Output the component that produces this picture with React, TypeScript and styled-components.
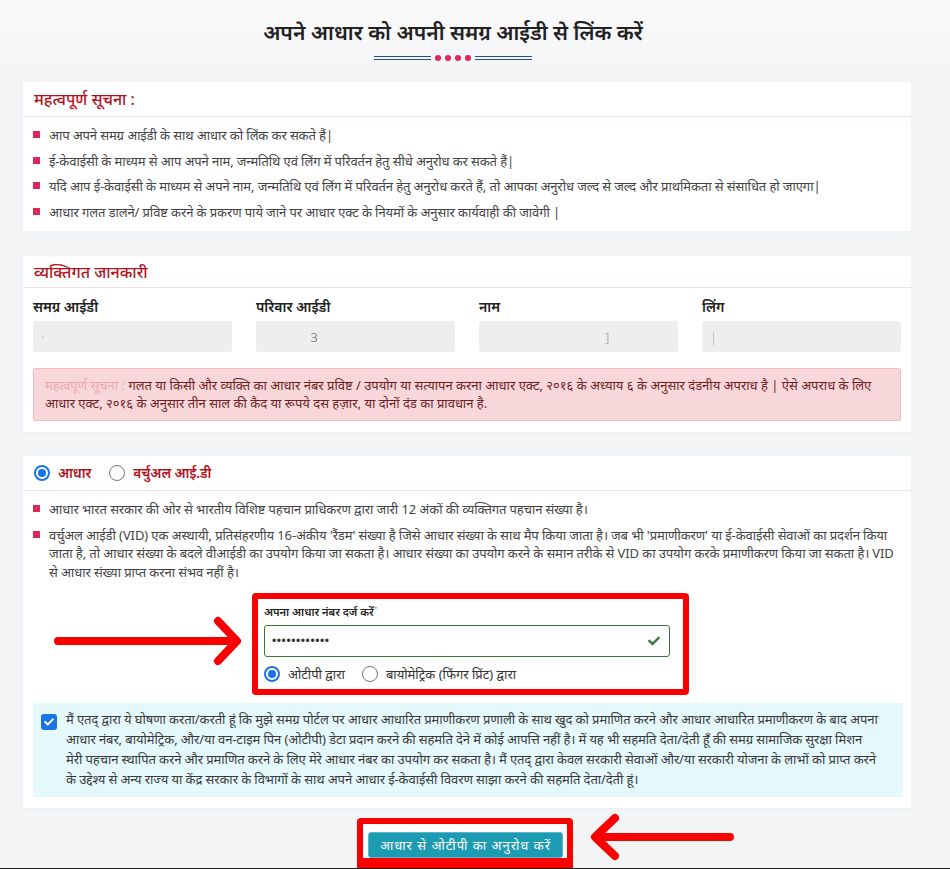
import React from 'react';
import styled, { createGlobalStyle } from 'styled-components';
import { FaCheck } from 'react-icons/fa';

const Global = createGlobalStyle`
  html, body { margin: 0; padding: 0; background: #f3f4f6; }
  body { font-family: "Noto Sans", "Liberation Sans", Arial, sans-serif; color: #333; }
  * { box-sizing: border-box; }
`;

const Page = styled.div`
  width: 950px;
  height: 869px;
  overflow: hidden;
  background: linear-gradient(#fafafa 0, #f3f4f6 78px, #f3f4f6 100%);
`;

const TitleSection = styled.header`
  width: 906px;
  height: 82px;
  display: flex;
  flex-direction: column;
  align-items: center;
  padding-top: 17px;
`;

const Title = styled.h1`
  margin: 0;
  font-size: 21px;
  line-height: 30px;
  font-weight: 600;
  color: #222;
`;

const Divider = styled.div`
  margin-top: 8px;
  display: flex;
  align-items: center;
  gap: 4px;
`;

const DividerLine = styled.span`
  display: block;
  width: 57px;
  height: 4px;
  border-top: 1px solid #2c4f80;
  border-bottom: 1px solid #2c4f80;
`;

const Dot = styled.span`
  display: block;
  width: 6px;
  height: 6px;
  border-radius: 50%;
  background: #e6245c;
`;

const Container = styled.main`
  width: 888px;
  margin-left: 23px;
  display: flex;
  flex-direction: column;
`;

const Card = styled.section<{ $gap?: number }>`
  background: #fff;
  margin-top: ${(p) => p.$gap ?? 0}px;
  box-shadow: 0 1px 2px rgba(0, 0, 0, 0.03);
  position: relative;
`;

const CardHeader = styled.div<{ $h: number }>`
  height: ${(p) => p.$h}px;
  display: flex;
  align-items: center;
  gap: 8px;
  padding: 0 11px;
  border-bottom: 1px solid #f2dfe3;
  color: #b3121c;
  font-size: 16px;
  font-weight: 500;
`;

const BulletList = styled.ul<{ $pad?: string }>`
  list-style: none;
  margin: 0;
  padding: ${(p) => p.$pad ?? '9px 14px 10px 10px'};
`;

const Bullet = styled.li`
  position: relative;
  padding-left: 16px;
  font-size: 13px;
  line-height: 18.5px;
  letter-spacing: -0.1px;
  color: #444;
  & + & { margin-top: 7px; }
  &::before {
    content: '';
    position: absolute;
    left: 0;
    top: 5px;
    width: 7px;
    height: 7px;
    background: #e0245e;
  }
`;

const CardBody = styled.div`
  padding: 10px 10px 11px 10px;
`;

const FieldGrid = styled.div`
  display: grid;
  grid-template-columns: repeat(4, 199px);
  column-gap: 24px;
`;

const Field = styled.div`
  display: flex;
  flex-direction: column;
`;

const FieldLabel = styled.label`
  font-size: 14px;
  line-height: 18px;
  font-weight: 600;
  color: #222;
  margin-bottom: 5px;
`;

const ReadonlyInput = styled.div`
  height: 31px;
  background: #eeeeee;
  border-radius: 3px;
  padding: 0 8px;
  display: flex;
  align-items: center;
  font-size: 13px;
  color: #d0d0d0;
  filter: blur(0.6px);
`;

const Faint = styled.span<{ $c: string; $ml?: number }>`
  color: ${(p) => p.$c};
  margin-left: ${(p) => p.$ml ?? 0}px;
`;

const Alert = styled.div`
  margin-top: 16px;
  background: #f8d7da;
  border: 1px solid #f1bcc2;
  border-radius: 2px;
  padding: 7px 11px 8px 11px;
  font-size: 13px;
  line-height: 18px;
  color: #6e1f25;
`;

const AlertLead = styled.span`
  color: #eaa9b1;
`;

const RadioOption = styled.label<{ $strong?: boolean; $gapRight?: number }>`
  display: inline-flex;
  align-items: center;
  gap: 8px;
  margin-right: ${(p) => p.$gapRight ?? 0}px;
  font-size: ${(p) => (p.$strong ? 13.5 : 13)}px;
  font-weight: ${(p) => (p.$strong ? 600 : 400)};
  color: ${(p) => (p.$strong ? '#b3121c' : '#333')};
`;

const RadioDot = styled.span<{ $on?: boolean }>`
  width: 16px;
  height: 16px;
  border-radius: 50%;
  flex: none;
  border: ${(p) => (p.$on ? '2px solid #1a73e8' : '1px solid #767676')};
  background: #fff;
  display: flex;
  align-items: center;
  justify-content: center;
  &::after {
    content: '';
    display: ${(p) => (p.$on ? 'block' : 'none')};
    width: 8px;
    height: 8px;
    border-radius: 50%;
    background: #1a73e8;
  }
`;

const Card3Body = styled.div`
  padding: 0 8px 11px 10px;
`;

const FormRow = styled.div`
  position: relative;
  margin-top: 12px;
`;

const Highlight = styled.div`
  width: 437px;
  margin-left: 219px;
  border: 6px solid #fb0000;
  border-radius: 4px;
  padding: 3px 13px 6px 6px;
  background: #fff;
`;

const SmallLabel = styled.div`
  font-size: 11px;
  line-height: 14px;
  font-weight: 600;
  color: #222;
  sup { font-size: 7px; color: #999; font-weight: 400; }
`;

const AadhaarInput = styled.div`
  margin-top: 6px;
  height: 32px;
  border: 1px solid #3c763d;
  border-radius: 3px;
  display: flex;
  align-items: center;
  justify-content: space-between;
  padding: 0 9px 0 7px;
  color: #3a7d3a;
`;

const Masked = styled.span`
  font-family: "Liberation Sans", Arial, sans-serif;
  font-size: 12px;
  letter-spacing: 0.6px;
  color: #333;
`;

const RadioRow = styled.div`
  margin-top: 8px;
  height: 18px;
  display: flex;
  align-items: center;
`;

const ArrowSvg = styled.svg<{ $l: number; $t: number }>`
  position: absolute;
  left: ${(p) => p.$l}px;
  top: ${(p) => p.$t}px;
  overflow: visible;
`;

const ConsentPanel = styled.div`
  margin-top: 8px;
  background: #e5f9fd;
  padding: 6px 24px 8px 8px;
  display: flex;
  gap: 9px;
`;

const CheckBox = styled.span`
  flex: none;
  margin-top: 5px;
  width: 16px;
  height: 16px;
  border-radius: 3px;
  background: #1a73e8;
  display: flex;
  align-items: center;
  justify-content: center;
  color: #fff;
`;

const ConsentText = styled.p`
  margin: 0;
  font-size: 13px;
  line-height: 20px;
  letter-spacing: -0.1px;
  color: #3a3a3a;
`;

const ButtonRow = styled.div`
  position: relative;
  padding-top: 10px;
`;

const ButtonHighlight = styled.div`
  width: 216px;
  margin-left: 334px;
  border: 6px solid #fb0000;
  border-bottom-width: 10px;
  border-radius: 4px 4px 0 0;
  padding: 8px 4px 0 5px;
  background: #fff;
`;

const PrimaryButton = styled.button`
  display: block;
  width: 195px;
  height: 26px;
  border: 1px solid #5cb8c8;
  border-radius: 3px;
  background: #1d9bb2;
  color: #fff;
  font-family: "Noto Sans", "Liberation Sans", Arial, sans-serif;
  font-size: 13px;
  letter-spacing: 1px;
  padding: 0;
  cursor: pointer;
`;

const Footer = styled.footer`
  height: 40px;
  background: #1c1c1c;
`;

const ArrowRight = ({ l, t }: { l: number; t: number }) => (
  <ArrowSvg $l={l} $t={t} width="196" height="52" viewBox="0 0 196 52">
    <g fill="none" stroke="#fb0000" strokeWidth="8" strokeLinecap="round" strokeLinejoin="round">
      <line x1="8" y1="26" x2="184" y2="26" />
      <polyline points="168,6 187,26 168,46" />
    </g>
  </ArrowSvg>
);

const ArrowLeft = ({ l, t }: { l: number; t: number }) => (
  <ArrowSvg $l={l} $t={t} width="155" height="50" viewBox="0 0 155 50">
    <g fill="none" stroke="#fb0000" strokeWidth="8" strokeLinecap="round" strokeLinejoin="round">
      <line x1="13" y1="24" x2="145" y2="24" />
      <polyline points="30,5 10,24 30,43" />
    </g>
  </ArrowSvg>
);

export default function App() {
  return (
    <Page>
      <Global />
      <TitleSection>
        <Title>अपने आधार को अपनी समग्र आईडी से लिंक करें</Title>
        <Divider>
          <DividerLine />
          <Dot />
          <Dot />
          <Dot />
          <Dot />
          <DividerLine />
        </Divider>
      </TitleSection>

      <Container>
        <Card>
          <CardHeader $h={35}>महत्वपूर्ण सूचना :</CardHeader>
          <BulletList>
            <Bullet>आप अपने समग्र आईडी के साथ आधार को लिंक कर सकते हैं|</Bullet>
            <Bullet>ई-केवाईसी के माध्यम से आप अपने नाम, जन्मतिथि एवं लिंग में परिवर्तन हेतु सीधे अनुरोध कर सकते हैं|</Bullet>
            <Bullet>यदि आप ई-केवाईसी के माध्यम से अपने नाम, जन्मतिथि एवं लिंग में परिवर्तन हेतु अनुरोध करते हैं, तो आपका अनुरोध जल्द से जल्द और प्राथमिकता से संसाधित हो जाएगा|</Bullet>
            <Bullet>आधार गलत डालने/ प्रविष्ट करने के प्रकरण पाये जाने पर आधार एक्ट के नियमों के अनुसार कार्यवाही की जावेगी |</Bullet>
          </BulletList>
        </Card>

        <Card $gap={25}>
          <CardHeader $h={32}>व्यक्तिगत जानकारी</CardHeader>
          <CardBody>
            <FieldGrid>
              <Field>
                <FieldLabel>समग्र आईडी</FieldLabel>
                <ReadonlyInput><Faint $c="#c9c9c9">·</Faint><Faint $c="#e2e2e2" $ml={4}>- - -</Faint></ReadonlyInput>
              </Field>
              <Field>
                <FieldLabel>परिवार आईडी</FieldLabel>
                <ReadonlyInput><Faint $c="#e4e4e4" $ml={8}>- - - - -</Faint><Faint $c="#888" $ml={4}>3</Faint></ReadonlyInput>
              </Field>
              <Field>
                <FieldLabel>नाम</FieldLabel>
                <ReadonlyInput><Faint $c="#e6e6e6">- - - - - - - - - - - - - - -</Faint><Faint $c="#b0b0b0" $ml={8}>]</Faint></ReadonlyInput>
              </Field>
              <Field>
                <FieldLabel>लिंग</FieldLabel>
                <ReadonlyInput><Faint $c="#c0c0c0">|</Faint></ReadonlyInput>
              </Field>
            </FieldGrid>
            <Alert>
              <AlertLead>महत्वपूर्ण सूचना : </AlertLead>
              गलत या किसी और व्यक्ति का आधार नंबर प्रविष्ट / उपयोग या सत्यापन करना आधार एक्ट, २०१६ के अध्याय ६ के अनुसार दंडनीय अपराध है | ऐसे अपराध के लिए आधार एक्ट, २०१६ के अनुसार तीन साल की कैद या रूपये दस हज़ार, या दोनों दंड का प्रावधान है.
            </Alert>
          </CardBody>
        </Card>

        <Card $gap={24}>
          <CardHeader $h={35}>
            <RadioOption $strong $gapRight={10}><RadioDot $on />आधार</RadioOption>
            <RadioOption $strong><RadioDot />वर्चुअल आई.डी</RadioOption>
          </CardHeader>
          <Card3Body>
            <BulletList $pad="9px 0 0 0">
              <Bullet>आधार भारत सरकार की ओर से भारतीय विशिष्ट पहचान प्राधिकरण द्वारा जारी 12 अंकों की व्यक्तिगत पहचान संख्या है।</Bullet>
              <Bullet>वर्चुअल आईडी (VID) एक अस्थायी, प्रतिसंहरणीय 16-अंकीय 'रैंडम' संख्या है जिसे आधार संख्या के साथ मैप किया जाता है। जब भी 'प्रमाणीकरण' या ई-केवाईसी सेवाओं का प्रदर्शन किया जाता है, तो आधार संख्या के बदले वीआईडी का उपयोग किया जा सकता है। आधार संख्या का उपयोग करने के समान तरीके से VID का उपयोग करके प्रमाणीकरण किया जा सकता है। VID से आधार संख्या प्राप्त करना संभव नहीं है।</Bullet>
            </BulletList>
            <FormRow>
              <ArrowRight l={17} t={22} />
              <Highlight>
                <SmallLabel>अपना आधार नंबर दर्ज करें<sup>*</sup></SmallLabel>
                <AadhaarInput>
                  <Masked>••••••••••••</Masked>
                  <FaCheck size={12} />
                </AadhaarInput>
                <RadioRow>
                  <RadioOption $gapRight={17}><RadioDot $on />ओटीपी द्वारा</RadioOption>
                  <RadioOption><RadioDot />बायोमेट्रिक (फिंगर प्रिंट) द्वारा</RadioOption>
                </RadioRow>
              </Highlight>
            </FormRow>
            <ConsentPanel>
              <CheckBox><FaCheck size={10} /></CheckBox>
              <ConsentText>
                मैं एतद् द्वारा ये घोषणा करता/करती हूं कि मुझे समग्र पोर्टल पर आधार आधारित प्रमाणीकरण प्रणाली के साथ खुद को प्रमाणित करने और आधार आधारित प्रमाणीकरण के बाद अपना आधार नंबर, बायोमेट्रिक, और/या वन-टाइम पिन (ओटीपी) डेटा प्रदान करने की सहमति देने में कोई आपत्ति नहीं है। में यह भी सहमति देता/देती हूँ की समग्र सामाजिक सुरक्षा मिशन मेरी पहचान स्थापित करने और प्रमाणित करने के लिए मेरे आधार नंबर का उपयोग कर सकता है। मैं एतद् द्वारा केवल सरकारी सेवाओं और/या सरकारी योजना के लाभों को प्राप्त करने के उद्देश्य से अन्य राज्य या केंद्र सरकार के विभागों के साथ अपने आधार ई-केवाईसी विवरण साझा करने की सहमति देता/देती हूं।
              </ConsentText>
            </ConsentPanel>
          </Card3Body>
        </Card>

        <ButtonRow>
          <ButtonHighlight>
            <PrimaryButton type="button">आधार से ओटीपी का अनुरोध करें</PrimaryButton>
          </ButtonHighlight>
          <ArrowLeft l={562} t={5} />
        </ButtonRow>
      </Container>
      <Footer />
    </Page>
  );
}
